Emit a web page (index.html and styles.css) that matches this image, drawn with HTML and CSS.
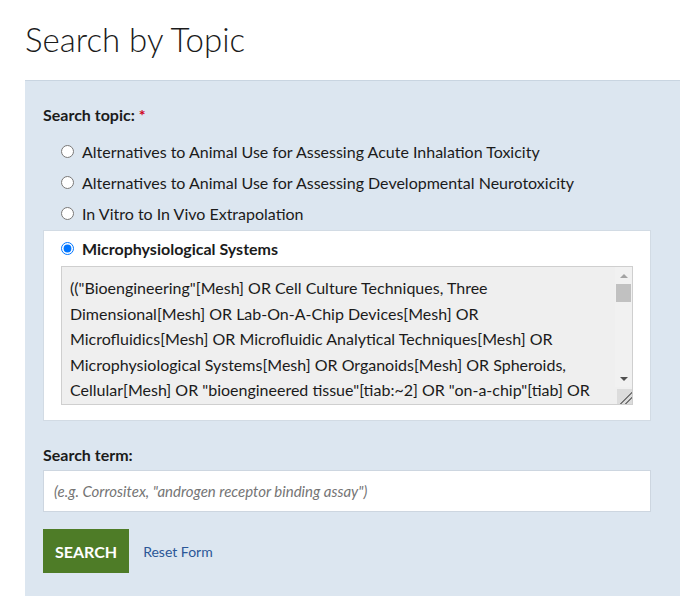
FILE: index.html
```html
<!DOCTYPE html>
<html>
<head>
    <title>Search by Topic</title>
    <link rel="stylesheet" href="styles.css">
</head>
<body>
    <h1 class="page-title">Search by Topic</h1>
    <form class="search-panel">
        <div class="field-label">Search topic: <span class="required">*</span></div>
        <div class="topic-list">
            <label class="topic-option">
                <input type="radio" name="topic">
                <span>Alternatives to Animal Use for Assessing Acute Inhalation Toxicity</span>
            </label>
            <label class="topic-option">
                <input type="radio" name="topic">
                <span>Alternatives to Animal Use for Assessing Developmental Neurotoxicity</span>
            </label>
            <label class="topic-option">
                <input type="radio" name="topic">
                <span>In Vitro to In Vivo Extrapolation</span>
            </label>
            <div class="topic-selected">
                <label class="topic-option">
                    <input type="radio" name="topic" checked>
                    <span>Microphysiological Systems</span>
                </label>
                <div class="query-wrap">
                    <textarea class="query-box" readonly>(("Bioengineering"[Mesh] OR Cell Culture Techniques, Three Dimensional[Mesh] OR Lab-On-A-Chip Devices[Mesh] OR Microfluidics[Mesh] OR Microfluidic Analytical Techniques[Mesh] OR Microphysiological Systems[Mesh] OR Organoids[Mesh] OR Spheroids, Cellular[Mesh] OR "bioengineered tissue"[tiab:~2] OR "on-a-chip"[tiab] OR "organ-on-a-chip"[tiab] OR "tissue chip"[tiab] OR "microphysiological system"[tiab] OR "microphysiological systems"[tiab] OR organoid*[tiab] OR spheroid*[tiab] OR "3D cell culture"[tiab] OR "three-dimensional cell culture"[tiab] OR microfluidic*[tiab]))</textarea>
                    
                    <div class="fake-scrollbar">
                        <div class="sb-arrow up"></div>
                        <div class="sb-thumb"></div>
                        <div class="sb-track"></div>
                        <div class="sb-arrow down"></div>
                    </div>
                </div>
            </div>
        </div>

        <div class="field-label term-label">Search term:</div>
        <input type="text" class="term-input" placeholder="(e.g. Corrositex, &quot;androgen receptor binding assay&quot;)">

        <div class="form-actions">
            <button type="button" class="search-btn">SEARCH</button>
            <a href="#" class="reset-link">Reset Form</a>
        </div>
    </form>
</body>
</html>
```

FILE: styles.css
```css
body {
    margin: 0;
    padding: 0;
    font-family: 'Lato', 'Liberation Sans', sans-serif;
    color: #1b1b1b;
    background: #ffffff;
}

.page-title {
    margin: 0;
    padding: 18px 25px 0;
    height: 62px;
    font-size: 33px;
    font-weight: 300;
    line-height: 42px;
}

.search-panel {
    margin-left: 25px;
    padding: 22px 18px 23px;
    background: #dce6f0;
    border-top: 1px solid #c9d5e1;
}

.field-label {
    font-size: 16px;
    font-weight: 700;
    line-height: 24px;
}

.required {
    color: #d0021b;
}

.topic-list {
    width: 608px;
    margin-top: 9px;
}

.topic-option {
    display: flex;
    align-items: center;
    gap: 8px;
    height: 31px;
    padding-left: 18px;
    font-size: 16px;
    cursor: pointer;
}

.topic-option input {
    margin: 0;
    width: 13px;
    height: 13px;
}

.topic-selected {
    background: #ffffff;
    border: 1px solid #d2dbe4;
    padding: 2px 17px 15px;
    margin-top: 1px;
}

.topic-selected .topic-option {
    padding-left: 0;
    font-weight: 700;
}

.query-wrap {
    position: relative;
    margin-top: 2px;
}

.query-box {
    display: block;
    width: 100%;
    height: 139px;
    box-sizing: border-box;
    padding: 8px 16px 8px 8px;
    background: #efefef;
    border: 1px solid #cfcfcf;
    font-family: inherit;
    font-size: 16px;
    line-height: 25.5px;
    color: #1b1b1b;
    overflow-y: scroll;
    resize: vertical;
}

.query-box::-webkit-resizer {
    background:
        linear-gradient(135deg, transparent 58%, #777 58%, #777 64%, transparent 64%, transparent 76%, #777 76%, #777 82%, transparent 82%),
        #dcdcdc;
}

.fake-scrollbar {
    position: absolute;
    top: 1px;
    right: 1px;
    bottom: 18px;
    width: 17px;
    background: #f1f1f1;
    display: flex;
    flex-direction: column;
    align-items: center;
    pointer-events: none;
}

.sb-arrow {
    height: 17px;
    width: 17px;
    display: flex;
    align-items: center;
    justify-content: center;
}

.sb-arrow::before {
    content: "";
    border-left: 4px solid transparent;
    border-right: 4px solid transparent;
}

.sb-arrow.up::before {
    border-bottom: 4px solid #a3a3a3;
}

.sb-arrow.down::before {
    border-top: 4px solid #505050;
}

.sb-thumb {
    width: 15px;
    height: 18px;
    background: #c1c1c1;
}

.sb-track {
    flex: 1;
}

.term-label {
    margin-top: 22px;
}

.term-input {
    display: block;
    width: 608px;
    height: 42px;
    box-sizing: border-box;
    margin-top: 3px;
    padding: 0 10px;
    border: 1px solid #cdd6e0;
    font-family: inherit;
    font-size: 15px;
}

.term-input::placeholder {
    color: #757575;
    font-style: italic;
}

.form-actions {
    display: flex;
    align-items: center;
    gap: 14px;
    margin-top: 17px;
}

.search-btn {
    background: #4e7c27;
    color: #ffffff;
    border: none;
    height: 44px;
    padding: 0 12px;
    font-family: inherit;
    font-size: 16px;
    font-weight: 700;
    cursor: pointer;
}

.reset-link {
    color: #2b5797;
    text-decoration: none;
    font-size: 14px;
}
```
